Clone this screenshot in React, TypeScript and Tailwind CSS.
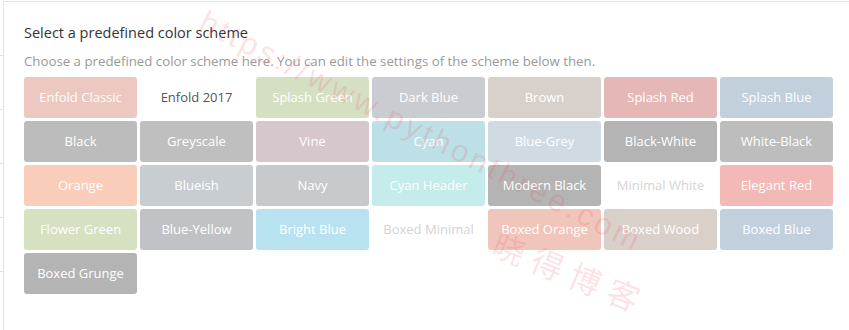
import React from "react";

type Scheme = {
  name: string;
  bg: string;
  text: string;
};

const schemes: Scheme[] = [
  { name: "Enfold Classic", bg: "bg-[#ecc8c0]", text: "text-white" },
  { name: "Enfold 2017", bg: "bg-white", text: "text-[#555555]" },
  { name: "Splash Green", bg: "bg-[#d5e0c2]", text: "text-white" },
  { name: "Dark Blue", bg: "bg-[#c9cdd2]", text: "text-white" },
  { name: "Brown", bg: "bg-[#d8d0cb]", text: "text-white" },
  { name: "Splash Red", bg: "bg-[#e6b7b7]", text: "text-white" },
  { name: "Splash Blue", bg: "bg-[#c2cfdd]", text: "text-white" },
  { name: "Black", bg: "bg-[#bcbcbc]", text: "text-white" },
  { name: "Greyscale", bg: "bg-[#bfbfbf]", text: "text-white" },
  { name: "Vine", bg: "bg-[#d6c7cc]", text: "text-white" },
  { name: "Cyan", bg: "bg-[#bde0e7]", text: "text-white" },
  { name: "Blue-Grey", bg: "bg-[#cfdae3]", text: "text-white" },
  { name: "Black-White", bg: "bg-[#b4b4b4]", text: "text-white" },
  { name: "White-Black", bg: "bg-[#bdbdbd]", text: "text-white" },
  { name: "Orange", bg: "bg-[#f9cdb9]", text: "text-white" },
  { name: "Blueish", bg: "bg-[#c8cdd1]", text: "text-white" },
  { name: "Navy", bg: "bg-[#c7cacd]", text: "text-white" },
  { name: "Cyan Header", bg: "bg-[#c4ecea]", text: "text-white" },
  { name: "Modern Black", bg: "bg-[#b4b4b4]", text: "text-white" },
  { name: "Minimal White", bg: "bg-white", text: "text-[#d4d4d4]" },
  { name: "Elegant Red", bg: "bg-[#f2b9b7]", text: "text-white" },
  { name: "Flower Green", bg: "bg-[#d6e1c1]", text: "text-white" },
  { name: "Blue-Yellow", bg: "bg-[#c0c2c5]", text: "text-white" },
  { name: "Bright Blue", bg: "bg-[#b8e2f0]", text: "text-white" },
  { name: "Boxed Minimal", bg: "bg-white", text: "text-[#d4d4d4]" },
  { name: "Boxed Orange", bg: "bg-[#f0c5bb]", text: "text-white" },
  { name: "Boxed Wood", bg: "bg-[#d9d0ca]", text: "text-white" },
  { name: "Boxed Blue", bg: "bg-[#c2cfdd]", text: "text-white" },
  { name: "Boxed Grunge", bg: "bg-[#b4b4b4]", text: "text-white" },
];

function SideTicks() {
  return (
    <div className="flex w-[3px] flex-col pt-[55px]">
      {[0, 1, 2, 3, 4].map((i) => (
        <div key={i} className="h-[54px] border-t border-[#e3e3e3]" />
      ))}
    </div>
  );
}

// site watermark lying over the panel
function Watermark() {
  return (
    <div className="pointer-events-none absolute inset-0 overflow-hidden font-['Liberation_Sans','Noto_Sans_CJK_SC',sans-serif] leading-none text-[rgba(240,70,90,0.16)]">
      <div className="absolute left-[202px] top-[4px] origin-left rotate-[27deg] text-[31px] tracking-[3.5px] whitespace-nowrap">
        https://www.pythonthree.com
      </div>
      <div className="absolute left-[494px] top-[228px] origin-left rotate-[22deg] text-[32px] tracking-[9px] whitespace-nowrap">
        晓得博客
      </div>
    </div>
  );
}

export default function App() {
  return (
    <div className="relative flex h-[330px] w-[849px] overflow-hidden bg-white font-['Open_Sans',sans-serif]">
      <SideTicks />
      <main className="mt-[1px] flex-1 border-l border-t border-[#e3e3e3] pl-[20px] pt-[20px]">
        <h2 className="text-[14.5px] leading-[22px] text-[#333333]">
          Select a predefined color scheme
        </h2>
        <p className="mt-[8px] text-[13.25px] leading-[18px] text-[#9a9a9a]">
          Choose a predefined color scheme here. You can edit the settings of the scheme below then.
        </p>
        <div className="mt-[7px] grid grid-cols-[repeat(7,113px)] gap-[3px]">
          {schemes.map((s) => (
            <button
              key={s.name}
              type="button"
              className={`flex h-[41px] items-center justify-center rounded-[3px] text-[13px] ${s.bg} ${s.text}`}
            >
              {s.name}
            </button>
          ))}
        </div>
      </main>
      <Watermark />
    </div>
  );
}
